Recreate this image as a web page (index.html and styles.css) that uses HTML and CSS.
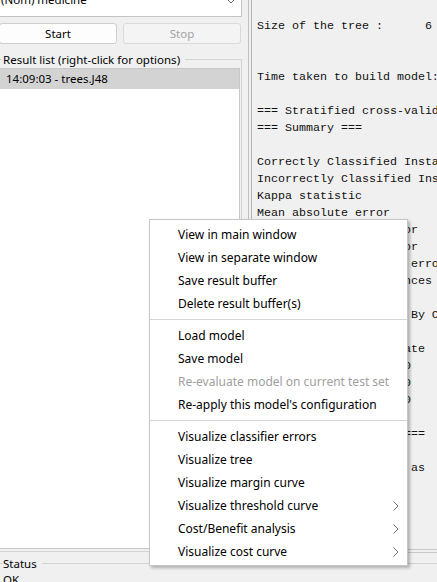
FILE: index.html
```html
<!DOCTYPE html>
<html>
<head>
<meta charset="utf-8">
<link rel="stylesheet" href="styles.css">
</head>
<body>
<div class="window">
  <div class="main">
    <div class="left">
      <div class="combo">
        <span class="combo-text">(Nom) medicine</span>
        <svg class="combo-arrow" width="10" height="6" viewBox="0 0 10 6"><polyline points="0.5,0.5 5,5 9.5,0.5" fill="none" stroke="#606060" stroke-width="1"/></svg>
      </div>
      <div class="buttons">
        <div class="btn">Start</div>
        <div class="btn btn-disabled">Stop</div>
      </div>
      <div class="group results">
        <div class="group-label">Result list (right-click for options)</div>
        <div class="list">
          <div class="list-row selected">14:09:03 - trees.J48</div>
        </div>
      </div>
    </div>
    <div class="right">
      <div class="output-group">
        <div class="output-area">
<pre class="output">

Size of the tree :      6


Time taken to build model: 0.01 seconds

=== Stratified cross-validation ===
=== Summary ===

Correctly Classified Instances          94               94      %
Incorrectly Classified Instances         6                6      %
Kappa statistic                          0.88  
Mean absolute error                      0.0803
Root mean squared error                  0.2277
Relative absolute error                 16.0592 %
Root relative squared error             45.5458 %
Total Number of Instances              100     

=== Detailed Accuracy By Class ===

                 TP Rate  FP Rate  Precision  Recall   F-Measure  MCC      ROC Area  PRC Area  Class
                 0.940    0.060    0.940      0.940    0.940      0.880    0.943     0.922     yes
                 0.940    0.060    0.940      0.940    0.940      0.880    0.943     0.922     no
Weighted Avg.    0.940    0.060    0.940      0.940    0.940      0.880    0.943     0.922     

=== Confusion Matrix ===

  a  b <-- classified as
 47  3 |  a = yes
  3 47 |  b = no
</pre>
        </div>
      </div>
    </div>
  </div>
  <div class="group status">
    <div class="group-label">Status</div>
    <div class="status-text">OK</div>
  </div>
</div>

<div class="menu">
  <div class="menu-item">View in main window</div>
  <div class="menu-item">View in separate window</div>
  <div class="menu-item">Save result buffer</div>
  <div class="menu-item">Delete result buffer(s)</div>
  <div class="menu-sep"></div>
  <div class="menu-item">Load model</div>
  <div class="menu-item">Save model</div>
  <div class="menu-item disabled">Re-evaluate model on current test set</div>
  <div class="menu-item">Re-apply this model's configuration</div>
  <div class="menu-sep"></div>
  <div class="menu-item">Visualize classifier errors</div>
  <div class="menu-item">Visualize tree</div>
  <div class="menu-item">Visualize margin curve</div>
  <div class="menu-item has-sub">Visualize threshold curve<svg class="sub-arrow" width="6" height="10" viewBox="0 0 6 10"><polyline points="0.5,0.5 5,5 0.5,9.5" fill="none" stroke="#707070" stroke-width="1"/></svg></div>
  <div class="menu-item has-sub">Cost/Benefit analysis<svg class="sub-arrow" width="6" height="10" viewBox="0 0 6 10"><polyline points="0.5,0.5 5,5 0.5,9.5" fill="none" stroke="#707070" stroke-width="1"/></svg></div>
  <div class="menu-item has-sub">Visualize cost curve<svg class="sub-arrow" width="6" height="10" viewBox="0 0 6 10"><polyline points="0.5,0.5 5,5 0.5,9.5" fill="none" stroke="#707070" stroke-width="1"/></svg></div>
</div>
</body>
</html>
```

FILE: styles.css
```css
* { box-sizing: border-box; }

html, body {
  margin: 0;
  padding: 0;
}

body {
  width: 437px;
  height: 582px;
  overflow: hidden;
  background: #f0f0f0;
  font-family: "Noto Sans", "Open Sans", sans-serif;
  font-size: 11.5px;
  color: #000;
  position: relative;
}

.window {
  display: flex;
  flex-direction: column;
}

.main {
  display: flex;
  height: 553px;
}

/* ---------- left column ---------- */
.left {
  width: 247px;
  margin-left: -3px;
  display: flex;
  flex-direction: column;
  flex: none;
}

.combo {
  margin-top: -7px;
  height: 24px;
  margin-right: 2px;
  background: #fff;
  border: 1px solid #c4c4c4;
  display: flex;
  align-items: flex-start;
  justify-content: space-between;
  padding: 0 5px 0 3px;
}

.combo-text {
  line-height: 16px;
  margin-top: -2px;
}

.combo-arrow {
  margin-top: 4px;
}

.buttons {
  display: flex;
  gap: 6px;
  margin: 6px 3px 0 2px;
  height: 21px;
}

.btn {
  flex: 1;
  border: 1px solid #cfcfcf;
  border-radius: 3px;
  background: #fdfdfd;
  display: flex;
  align-items: center;
  justify-content: center;
}

.btn-disabled {
  background: #f4f4f4;
  border-color: #dadada;
  color: #a3a3a3;
}

.group {
  border: 1px solid #d3d3d3;
  display: flex;
  flex-direction: column;
  align-items: flex-start;
}

.group-label {
  background: #f0f0f0;
  line-height: 16px;
  height: 16px;
  margin-top: -8px;
  margin-left: 4px;
  padding: 0 5px 0 1px;
  flex: none;
}

.results {
  margin-top: 15px;
  margin-right: 2px;
  height: 493px;
}

.list {
  align-self: stretch;
  flex: 1;
  margin: 0 1px 2px 0;
  background: #fff;
  border: 1px solid #c8c8c8;
  border-left: none;
}

.list-row {
  height: 20px;
  line-height: 20px;
  padding-left: 8px;
}

.list-row.selected {
  background: #d3d3d3;
}

/* ---------- right column ---------- */
.right {
  flex: 1;
  padding-left: 4px;
  display: flex;
  flex-direction: column;
}

.output-group {
  flex: 1;
  border-left: 1px solid #c0c0c0;
  border-bottom: 1px solid #c8c8c8;
  padding: 0 0 2px 2px;
  display: flex;
}

.output-area {
  flex: 1;
  border-left: 1px solid #b4b4b4;
  border-bottom: 1px solid #c8c8c8;
  background: #f0f0f0;
  overflow: hidden;
}

.output {
  margin: 0;
  padding: 1px 0 0 5px;
  font-family: "Liberation Mono", "DejaVu Sans Mono", monospace;
  font-size: 11.67px;
  line-height: 17px;
  color: #111;
  white-space: pre;
}

/* ---------- status ---------- */
.status {
  margin-top: 10px;
  margin-left: -3px;
  border-right: none;
  height: 40px;
}

.status-text {
  line-height: 16px;
  padding-left: 5px;
}

/* ---------- context menu ---------- */
.menu {
  position: absolute;
  left: 149px;
  top: 219px;
  width: 259px;
  background: #fff;
  border: 1px solid #c6c6c6;
  box-shadow: 2px 2px 3px rgba(0, 0, 0, 0.28);
  padding: 3px 0 2px 0;
  font-size: 12px;
}

.menu-item {
  height: 23px;
  line-height: 23px;
  padding-left: 28px;
  padding-right: 8px;
  display: flex;
  align-items: center;
  justify-content: space-between;
  white-space: nowrap;
}

.menu-item.disabled {
  color: #a0a0a0;
}

.sub-arrow {
  flex: none;
}

.menu-sep {
  height: 1px;
  background: #d7d7d7;
  margin: 4px 0;
}
```
